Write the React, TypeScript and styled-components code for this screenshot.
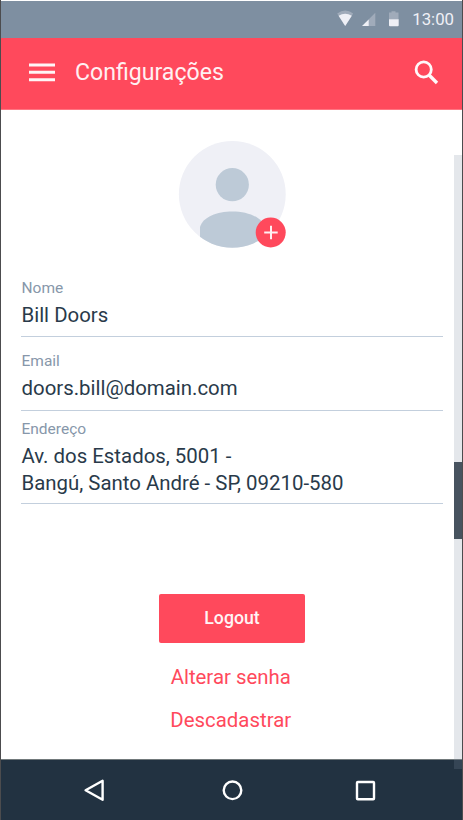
import React from "react";
import styled, { createGlobalStyle } from "styled-components";

const GlobalStyle = createGlobalStyle`
  *, *::before, *::after { box-sizing: border-box; }
  body { margin: 0; background: #fff; font-family: Roboto, sans-serif; overflow: hidden; }
  button { border: 0; padding: 0; background: none; font: inherit; cursor: pointer; }
`;

const Screen = styled.div`
  position: relative;
  display: flex;
  flex-direction: column;
  width: 463px;
  height: 820px;
  padding-top: 1px;
  border: solid #4c4c4e;
  border-width: 0 1px;
  background: #fff;
  overflow: hidden;
`;

const StatusBar = styled.div`
  display: flex;
  align-items: center;
  justify-content: flex-end;
  flex: none;
  height: 37px;
  padding: 0 8px 2px 0;
  background: #7e8fa1;
`;

const StatusIcons = styled.svg`
  display: block;
  width: 64px;
  height: 20px;
  margin-right: 11px;
`;

const Clock = styled.span`
  font-size: 16.8px;
  line-height: 20px;
  color: #eff0f6;
`;

const AppBar = styled.header`
  display: flex;
  align-items: center;
  flex: none;
  height: 72px;
  padding: 0 22px 2px 28px;
  background: #ff495c;
  border-bottom: 1px solid #ff7582;
`;

const MenuButton = styled.button`
  display: flex;
  width: 26px;
  height: 20px;
`;

const Title = styled.h1`
  flex: 1;
  margin: 0 0 0 20px;
  font-size: 23.1px;
  font-weight: 400;
  line-height: 30px;
  color: #fff0f2;
`;

const SearchButton = styled.button`
  display: flex;
  width: 26px;
  height: 26px;
`;

const Content = styled.main`
  display: flex;
  flex-direction: column;
  align-items: center;
  flex: 1;
  padding: 30px 19px 0 20px;
`;

const Avatar = styled.button`
  display: block;
  width: 108px;
  height: 108px;
  margin-bottom: 27px;
`;

const Form = styled.dl`
  align-self: stretch;
  margin: 0;
`;

const Field = styled.div<{ $height: number; $top: number }>`
  height: ${(p) => p.$height}px;
  padding-top: ${(p) => p.$top}px;
  border-bottom: 1px solid #c3cfdd;
`;

const Label = styled.dt`
  padding-left: 0.5px;
  font-size: 15.5px;
  line-height: 20px;
  color: #8797aa;
`;

const Value = styled.dd`
  margin: 4px 0 0;
  padding-left: 0.5px;
  font-size: 20.4px;
  line-height: 27px;
  color: #293a4a;
  white-space: pre-line;
`;

const Actions = styled.div`
  display: flex;
  flex-direction: column;
  align-items: center;
  margin-top: 90px;
`;

const LogoutButton = styled.button`
  width: 146px;
  height: 49px;
  margin-bottom: 19px;
  padding-bottom: 1px;
  border-radius: 2px;
  background: #ff495c;
  font-size: 17.7px;
  font-weight: 500;
  color: #fff4f5;
`;

const TextButton = styled.button`
  height: 30px;
  margin-bottom: 13px;
  padding-right: 2.5px;
  font-size: 20.4px;
  line-height: 30px;
  color: #ff495c;
`;

const ScrollTrack = styled.div`
  position: absolute;
  top: 155px;
  right: 0;
  width: 8px;
  height: 614px;
  padding-top: 306.5px;
  background: rgba(126, 143, 161, 0.21);
`;

const ScrollThumb = styled.div`
  height: 77.5px;
  background: #47535f;
`;

const NavBar = styled.nav`
  display: flex;
  align-items: center;
  justify-content: space-between;
  flex: none;
  height: 61px;
  padding: 0 84px 0 80px;
  background: #223241;
  border-top: 1px solid #71797b;
`;

const NavButton = styled.button`
  display: flex;
  width: 26px;
  height: 26px;
`;

const fields = [
  { label: "Nome", value: "Bill Doors", height: 62, top: 3 },
  { label: "Email", value: "doors.bill@domain.com", height: 74, top: 14 },
  { label: "Endereço", value: "Av. dos Estados, 5001 -\nBangú, Santo André - SP, 09210-580", height: 93, top: 8 },
];

export default function App() {
  return (
    <>
      <GlobalStyle />
      <Screen>
        <StatusBar>
          <StatusIcons viewBox="0 0 64 20" fill="#eff0f6" aria-hidden="true">
            <path d="M0.2 4.6Q8.2 -1.5 16.2 4.6L8.2 17Z" opacity=".3" />
            <path d="M1.6 6.8Q8.2 2.6 14.8 6.8L8.2 17Z" />
            <path d="M38.3 3.8V17H25.1Z" opacity=".3" />
            <path d="M31.7 10.4V17H25.1Z" />
            <path d="M54.5 2.2h4v1.3h3V10.5h-9.5V3.5h2.5Z" opacity=".3" />
            <path d="M52 10.2h9.7v6a1 1 0 0 1-1 1h-7.7a1 1 0 0 1-1-1Z" />
          </StatusIcons>
          <Clock>13:00</Clock>
        </StatusBar>
        <AppBar>
          <MenuButton aria-label="Menu">
            <svg width="26" height="20" fill="#fff5f6">
              <path d="M0 .5h26v3H0zM0 7.8h26v3H0zM0 15.3h26v3H0z" />
            </svg>
          </MenuButton>
          <Title>Configurações</Title>
          <SearchButton aria-label="Buscar">
            <svg width="26" height="26" fill="none" stroke="#fff9fa" strokeWidth="2.8">
              <circle cx="9.7" cy="9.5" r="7.6" />
              <path d="M14.8 14.8L23 23" strokeWidth="3.4" />
            </svg>
          </SearchButton>
        </AppBar>
        <Content>
          <Avatar aria-label="Alterar foto">
            <svg width="108" height="108" viewBox="0 0 108 108">
              <defs>
                <clipPath id="portrait">
                  <circle cx="54.3" cy="54.3" r="53.4" />
                </clipPath>
              </defs>
              <circle cx="54.3" cy="54.3" r="53.4" fill="#eff0f6" />
              <g clipPath="url(#portrait)" fill="#bdcad7">
                <circle cx="54.3" cy="44.7" r="16.6" />
                <path d="M22 108V87C25 77 39 71.5 54.3 71.5S84 77 87 87v21Z" />
              </g>
              <circle cx="92.7" cy="92.5" r="15" fill="#ff495c" />
              <path d="M86.2 92.5h13.5M93 85.7V99.2" stroke="#fff0f2" strokeWidth="2" />
            </svg>
          </Avatar>
          <Form>
            {fields.map((f) => (
              <Field key={f.label} $height={f.height} $top={f.top}>
                <Label>{f.label}</Label>
                <Value>{f.value}</Value>
              </Field>
            ))}
          </Form>
          <Actions>
            <LogoutButton>Logout</LogoutButton>
            <TextButton>Alterar senha</TextButton>
            <TextButton>Descadastrar</TextButton>
          </Actions>
        </Content>
        <NavBar>
          <NavButton aria-label="Voltar">
            <svg width="26" height="26" fill="none" stroke="#fff" strokeWidth="2.4" strokeLinejoin="round">
              <path d="M21.6 3.8V22.8L4.6 13.3Z" />
            </svg>
          </NavButton>
          <NavButton aria-label="Início">
            <svg width="26" height="26" fill="none" stroke="#fff" strokeWidth="2.4">
              <circle cx="15.5" cy="13.3" r="8.8" />
            </svg>
          </NavButton>
          <NavButton aria-label="Recentes">
            <svg width="26" height="26" fill="none" stroke="#fff" strokeWidth="2.4">
              <rect x="5" y="5" width="17" height="17.2" rx="0.8" />
            </svg>
          </NavButton>
        </NavBar>
        <ScrollTrack>
          <ScrollThumb />
        </ScrollTrack>
      </Screen>
    </>
  );
}
